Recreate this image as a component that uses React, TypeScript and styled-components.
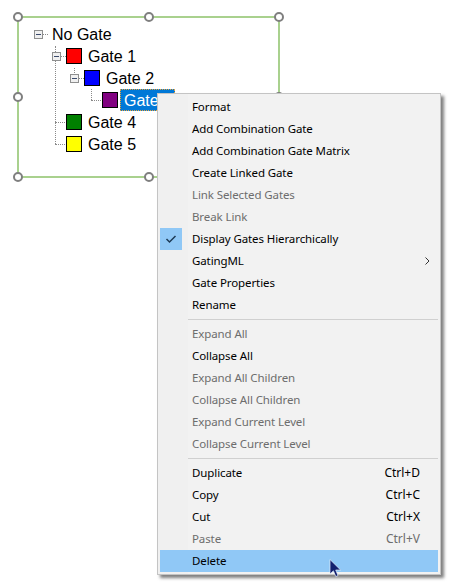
import styled, { createGlobalStyle } from "styled-components";

const GlobalStyle = createGlobalStyle`
  html, body {
    margin: 0;
    padding: 0;
    background: #fff;
  }
`;

type MenuEntry =
  | { sep: true }
  | {
      sep?: false;
      label: string;
      disabled?: boolean;
      checked?: boolean;
      submenu?: boolean;
      shortcut?: string;
      active?: boolean;
    };

const menuItems: MenuEntry[] = [
  { label: "Format" },
  { label: "Add Combination Gate" },
  { label: "Add Combination Gate Matrix" },
  { label: "Create Linked Gate" },
  { label: "Link Selected Gates", disabled: true },
  { label: "Break Link", disabled: true },
  { label: "Display Gates Hierarchically", checked: true },
  { label: "GatingML", submenu: true },
  { label: "Gate Properties" },
  { label: "Rename" },
  { sep: true },
  { label: "Expand All", disabled: true },
  { label: "Collapse All" },
  { label: "Expand All Children", disabled: true },
  { label: "Collapse All Children", disabled: true },
  { label: "Expand Current Level", disabled: true },
  { label: "Collapse Current Level", disabled: true },
  { sep: true },
  { label: "Duplicate", shortcut: "Ctrl+D" },
  { label: "Copy", shortcut: "Ctrl+C" },
  { label: "Cut", shortcut: "Ctrl+X" },
  { label: "Paste", shortcut: "Ctrl+V", disabled: true },
  { label: "Delete", active: true },
];

const handles = [
  { x: 0, y: 0 },
  { x: 50, y: 0 },
  { x: 100, y: 0 },
  { x: 0, y: 50 },
  { x: 100, y: 50 },
  { x: 0, y: 100 },
  { x: 50, y: 100 },
  { x: 100, y: 100 },
];

const Expander = () => (
  <ExpanderBox>
    <svg width="9" height="9" viewBox="0 0 9 9">
      <rect x="0.5" y="0.5" width="8" height="8" fill="#f0f0f0" stroke="#8e8f8f" />
      <path d="M2 4.5h5" stroke="#3a4a6b" strokeWidth="1" />
    </svg>
  </ExpanderBox>
);

const App = () => {
  return (
    <Page>
      <GlobalStyle />
      <GateBox>
        {handles.map((h) => (
          <Handle key={`${h.x}-${h.y}`} $x={h.x} $y={h.y} />
        ))}
        <Tree>
          <Row $indent={15}>
            <Expander />
            <HLine $left={24} $width={5} />
            <VLine $left={36} $top={23} $height={98} />
            <Label $gap={4}>No Gate</Label>
          </Row>
          <Row $indent={33}>
            <Expander />
            <HLine $left={42} $width={5} />
            <Swatch $color="#ff0000" />
            <Label>Gate 1</Label>
            <VLine $left={55} $top={23} $height={5} />
          </Row>
          <Row $indent={51}>
            <Expander />
            <HLine $left={60} $width={5} />
            <Swatch $color="#0000ff" />
            <Label>Gate 2</Label>
          </Row>
          <Row $indent={83}>
            <VLine $left={72} $top={0} $height={11} />
            <HLine $left={72} $width={10} />
            <Swatch $color="#800080" />
            <Selected>Gate 3</Selected>
          </Row>
          <Row $indent={47}>
            <HLine $left={36} $width={10} />
            <Swatch $color="#008000" />
            <Label>Gate 4</Label>
          </Row>
          <Row $indent={47}>
            <HLine $left={36} $width={10} />
            <Swatch $color="#ffff00" />
            <Label>Gate 5</Label>
          </Row>
        </Tree>
      </GateBox>

      <Menu>
        {menuItems.map((item, i) =>
          item.sep ? (
            <Separator key={i} />
          ) : (
            <Item key={i} $active={item.active} $disabled={item.disabled}>
              <Gutter>
                {item.checked && (
                  <CheckBox>
                    <svg width="12" height="10" viewBox="0 0 12 10">
                      <path d="M1.5 5 L4.5 8 L10.5 2" fill="none" stroke="#1d3a55" strokeWidth="1.5" />
                    </svg>
                  </CheckBox>
                )}
              </Gutter>
              <ItemLabel>{item.label}</ItemLabel>
              {item.shortcut && <Shortcut>{item.shortcut}</Shortcut>}
              {item.submenu && (
                <SubArrow>
                  <svg width="5" height="8" viewBox="0 0 5 8">
                    <path d="M0.5 0.5 L4 4 L0.5 7.5" fill="none" stroke="#333" strokeWidth="1" />
                  </svg>
                </SubArrow>
              )}
            </Item>
          ),
        )}
        <Cursor>
          <svg width="13" height="19" viewBox="0 0 13 19">
            <path d="M1 0.5 V15 L4.4 11.8 L6.8 17.6 L9 16.6 L6.7 11 H11.6 Z" fill="#14206e" stroke="#e8f0fa" strokeWidth="0.7" />
          </svg>
        </Cursor>
      </Menu>
    </Page>
  );
};

export default App;

const Page = styled.div`
  position: relative;
  width: 452px;
  height: 588px;
  padding: 16px 0 0 17px;
  box-sizing: border-box;
  overflow: hidden;
  background: #fff;
`;

const GateBox = styled.div`
  position: relative;
  width: 263px;
  height: 162px;
  box-sizing: border-box;
  border: 2px solid #a9d18e;
`;

const Handle = styled.div<{ $x: number; $y: number }>`
  position: absolute;
  left: calc(-1px + (100% + 2px) * ${(p) => p.$x / 100});
  top: calc(-1px + (100% + 2px) * ${(p) => p.$y / 100});
  width: 10px;
  height: 10px;
  box-sizing: border-box;
  border: 2px solid #7f7f7f;
  border-radius: 50%;
  background: #fff;
  transform: translate(-50%, -50%);
`;

const Tree = styled.div`
  display: flex;
  flex-direction: column;
  padding-top: 5px;
  font-family: "Liberation Sans", Arial, sans-serif;
  font-size: 16px;
  color: #000;
`;

const Row = styled.div<{ $indent: number }>`
  position: relative;
  display: flex;
  align-items: center;
  height: 22px;
  padding-left: ${(p) => p.$indent}px;
`;

const ExpanderBox = styled.span`
  position: relative;
  z-index: 1;
  display: flex;
  width: 9px;
  height: 9px;
  margin-right: 5px;
`;

const HLine = styled.span<{ $left: number; $width: number }>`
  position: absolute;
  left: ${(p) => p.$left}px;
  top: 11px;
  width: ${(p) => p.$width}px;
  border-top: 1px dotted #8a8a8a;
`;

const VLine = styled.span<{ $left: number; $top: number; $height: number }>`
  position: absolute;
  left: ${(p) => p.$left}px;
  top: ${(p) => p.$top}px;
  height: ${(p) => p.$height}px;
  border-left: 1px dotted #8a8a8a;
`;

const Swatch = styled.span<{ $color: string }>`
  width: 16px;
  height: 16px;
  box-sizing: border-box;
  border: 1px solid #000;
  background: ${(p) => p.$color};
`;

const Label = styled.span<{ $gap?: number }>`
  margin-left: ${(p) => p.$gap ?? 6}px;
  margin-top: 2px;
  line-height: 22px;
`;

const Selected = styled.span`
  margin-left: 2px;
  height: 22px;
  width: 55px;
  box-sizing: border-box;
  padding-left: 3px;
  line-height: 22px;
  color: #fff;
  background: #0078d7;
  border: 1px dotted #e8a33d;
  white-space: nowrap;
`;

const Menu = styled.div`
  position: absolute;
  left: 157px;
  top: 93px;
  width: 284px;
  box-sizing: border-box;
  padding: 2px;
  background: linear-gradient(to right, #f0f0f0 30px, #f2f2f2 30px);
  border: 1px solid #c4c4c4;
  box-shadow: 3px 3px 3px rgba(0, 0, 0, 0.5);
  font-family: "Noto Sans", "Open Sans", sans-serif;
  font-size: 12px;
`;

const Item = styled.div<{ $active?: boolean; $disabled?: boolean }>`
  display: flex;
  align-items: center;
  height: 22px;
  color: ${(p) => (p.$disabled ? "#6d6d6d" : "#000")};
  background: ${(p) => (p.$active ? "#90c8f6" : "transparent")};
`;

const Gutter = styled.span`
  display: flex;
  width: 22px;
  height: 22px;
  margin-right: 10px;
  flex-shrink: 0;
`;

const CheckBox = styled.span`
  display: flex;
  align-items: center;
  justify-content: center;
  width: 22px;
  height: 22px;
  background: #90c8f6;
`;

const ItemLabel = styled.span`
  flex: 1;
  white-space: nowrap;
  font-size: 11.5px;
  letter-spacing: -0.1px;
  padding-bottom: 1px;
`;

const Shortcut = styled.span`
  margin-right: 18px;
  padding-bottom: 1px;
`;

const SubArrow = styled.span`
  display: flex;
  margin-right: 8px;
`;

const Separator = styled.div`
  height: 1px;
  margin: 3px 0 3px 28px;
  background: #d0d0d0;
`;

const Cursor = styled.span`
  position: absolute;
  left: 171px;
  top: 465px;
  display: flex;
`;
